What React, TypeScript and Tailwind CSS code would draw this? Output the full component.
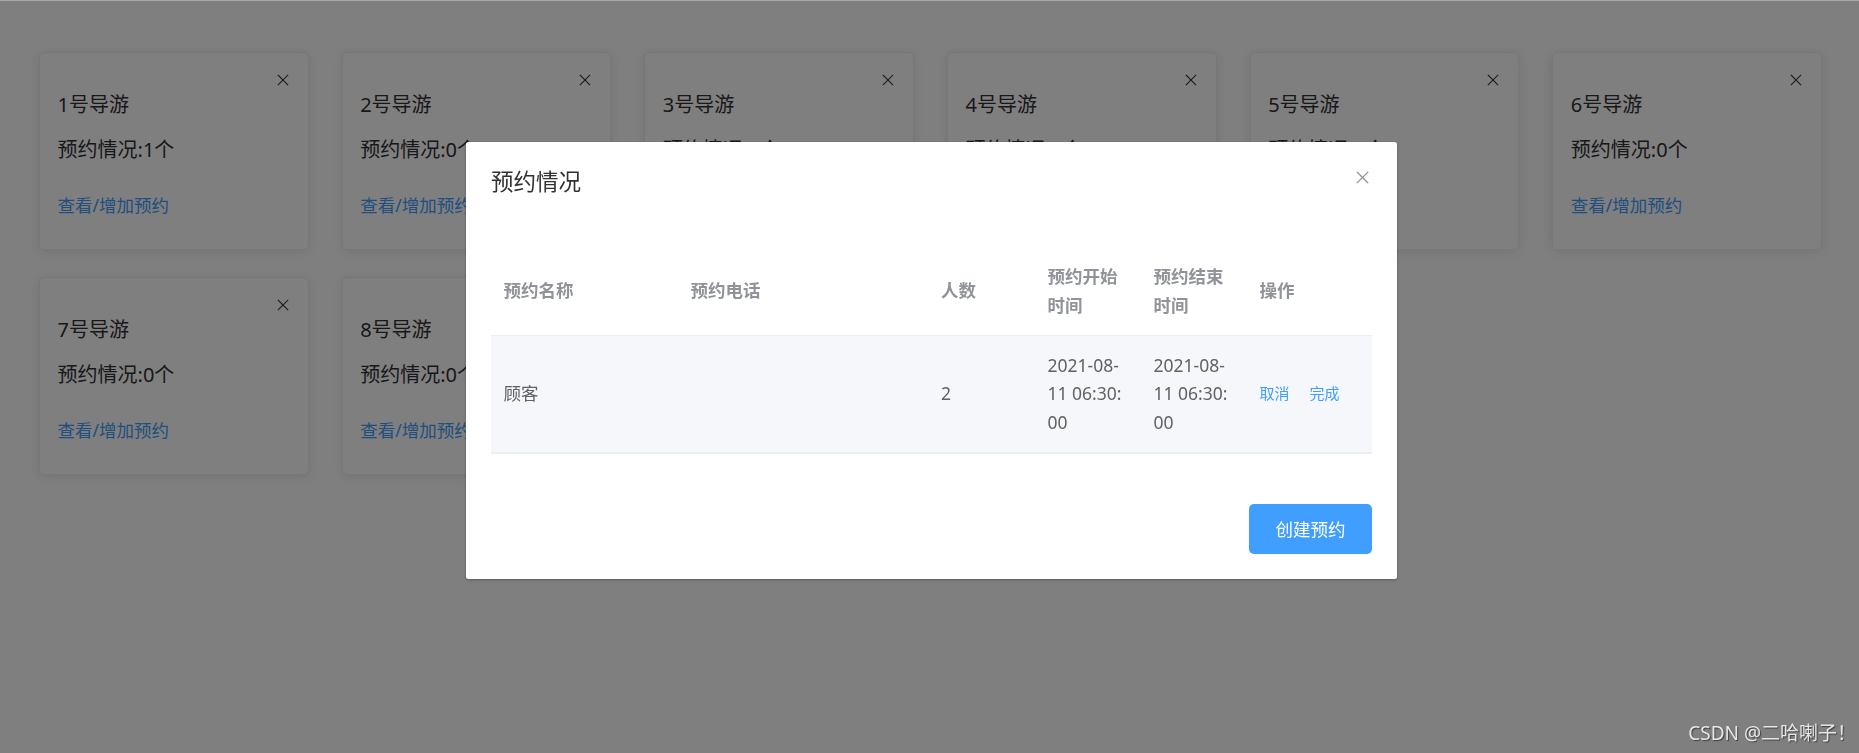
import React from "react";

const FONT = { fontFamily: '"Noto Sans", "Noto Sans CJK SC", sans-serif' };

function XIcon({ size, stroke, color }: { size: number; stroke: number; color: string }) {
  return (
    <svg width={size} height={size} viewBox="0 0 20 20" fill="none">
      <path d="M2 2 L18 18 M18 2 L2 18" stroke={color} strokeWidth={stroke} strokeLinecap="square" />
    </svg>
  );
}

function Card({ n, count }: { n: number; count: number }) {
  return (
    <div className="h-[198px] bg-white rounded-[5px] border border-[#ebeef5] shadow-[0_2px_12px_0_rgba(0,0,0,0.1)] pt-[21px] pl-[17.5px] pr-[19px] flex flex-col">
      <div className="flex justify-end h-[12px]">
        <XIcon size={12} stroke={1.8} color="#303133" />
      </div>
      <div className="mt-[5px] text-[20px] leading-[28px] text-[#303133]">{n}号导游</div>
      <div className="mt-[17px] text-[20px] leading-[28px] text-[#303133]">预约情况:{count}个</div>
      <div className="mt-[29px] text-[17.5px] leading-[24px] text-[#409eff]">查看/增加预约</div>
    </div>
  );
}

export default function App() {
  const cards = [1, 2, 3, 4, 5, 6, 7, 8];
  return (
    <div className="relative w-full h-[753px] bg-white overflow-hidden" style={FONT}>
      <div className="grid grid-cols-6 gap-x-[33px] gap-y-[27px] pt-[52px] pl-[39px] pr-[37px]">
        {cards.map((n) => (
          <Card key={n} n={n} count={n === 1 ? 1 : 0} />
        ))}
      </div>

      <div className="fixed inset-0 bg-black/50 border-t border-[#a9a9a9]">
        <div className="relative mt-[141px] ml-[466px] w-[931px] bg-white rounded-[2.5px] shadow-[0_1px_3px_rgba(0,0,0,0.3)]">
          <div className="relative pt-[25px] px-[25px] pb-[12.5px]">
            <div className="text-[22.5px] leading-[30px] text-[#303133]">预约情况</div>
            <button className="absolute top-[25px] right-[25px] w-[20px] h-[20px] flex items-center justify-center">
              <XIcon size={13} stroke={2} color="#909399" />
            </button>
          </div>
          <div className="pt-[37.5px] px-[25px] pb-[37.5px]">
            <table className="w-[881px] table-fixed border-collapse text-[17.5px] leading-[28.75px]">
              <colgroup>
                <col className="w-[187px]" />
                <col className="w-[250.5px]" />
                <col className="w-[106.5px]" />
                <col className="w-[106px]" />
                <col className="w-[106px]" />
                <col className="w-[125px]" />
              </colgroup>
              <thead>
                <tr className="text-[#909399] font-bold text-left">
                  <th className="py-[15px] px-[12.5px] align-middle border-b border-[#ebeef5]">预约名称</th>
                  <th className="py-[15px] px-[12.5px] align-middle border-b border-[#ebeef5]">预约电话</th>
                  <th className="py-[15px] px-[12.5px] align-middle border-b border-[#ebeef5]">人数</th>
                  <th className="py-[15px] px-[12.5px] align-middle border-b border-[#ebeef5]">预约开始时间</th>
                  <th className="py-[15px] px-[12.5px] align-middle border-b border-[#ebeef5]">预约结束时间</th>
                  <th className="py-[15px] px-[12.5px] align-middle border-b border-[#ebeef5]">操作</th>
                </tr>
              </thead>
              <tbody>
                <tr className="bg-[#f5f7fa] text-[#606266]">
                  <td className="py-[15px] px-[12.5px] align-middle border-b-2 border-[#ebeef5]">顾客</td>
                  <td className="py-[15px] px-[12.5px] align-middle border-b-2 border-[#ebeef5]"></td>
                  <td className="py-[15px] px-[12.5px] align-middle border-b-2 border-[#ebeef5]">2</td>
                  <td className="py-[15px] px-[12.5px] align-middle border-b-2 border-[#ebeef5]">
                    2021-08-<br />11 06:30:<br />00
                  </td>
                  <td className="py-[15px] px-[12.5px] align-middle border-b-2 border-[#ebeef5]">
                    2021-08-<br />11 06:30:<br />00
                  </td>
                  <td className="py-[15px] px-[12.5px] align-middle border-b-2 border-[#ebeef5]">
                    <div className="flex items-center gap-[20px] text-[15px] text-[#409eff]">
                      <span>取消</span>
                      <span>完成</span>
                    </div>
                  </td>
                </tr>
              </tbody>
            </table>
          </div>
          <div className="flex justify-end pt-[12.5px] px-[25px] pb-[25px]">
            <button className="w-[123px] h-[50px] rounded-[5px] bg-[#409eff] text-white text-[17.5px]">创建预约</button>
          </div>
        </div>
      </div>

      <div className="fixed right-[3px] bottom-[10px] text-[19px] leading-[20px] text-[#e6e6e6] [text-shadow:1px_1px_1px_rgba(0,0,0,0.5)]">
        CSDN @二哈喇子！
      </div>
    </div>
  );
}
